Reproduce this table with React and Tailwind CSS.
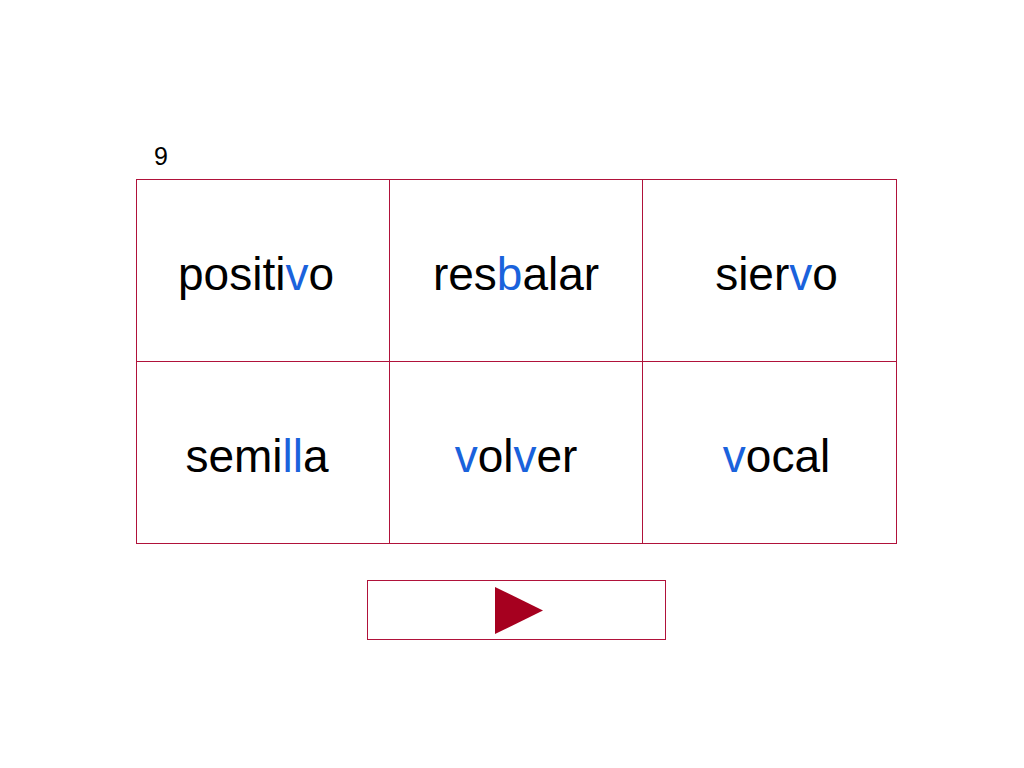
import React from "react";

const B = ({ children }) => <span className="text-[#1a62dc]">{children}</span>;

function Cell({ children, shift = "" }) {
  return (
    <div className={`flex h-[182px] items-center justify-center border-r border-b border-[#b0123a] pt-[6px] ${shift}`}>
      <span className="text-[46px] leading-none text-black">{children}</span>
    </div>
  );
}

export default function App() {
  return (
    <div className="min-h-[768px] w-[1024px] bg-white" style={{ fontFamily: '"Liberation Sans", Arial, sans-serif' }}>
      <div className="ml-[136px] w-[761px] pt-[144px]">
        <div className="pl-[18px] text-[25px] leading-none text-black h-[35px]">9</div>
        <div className="grid grid-cols-[253px_253px_254px] border-l border-t border-[#b0123a]">
          <Cell shift="pr-[14px]">positi<B>v</B>o</Cell>
          <Cell>res<B>b</B>alar</Cell>
          <Cell shift="pl-[14px]">sier<B>v</B>o</Cell>
          <Cell shift="pr-[12px]">semi<B>ll</B>a</Cell>
          <Cell><B>v</B>ol<B>v</B>er</Cell>
          <Cell shift="pl-[14px]"><B>v</B>ocal</Cell>
        </div>
        <div className="mt-[36px] flex justify-center">
          <div className="flex h-[60px] w-[299px] items-center justify-center border border-[#b0123a]">
            <svg width="48" height="47" viewBox="0 0 48 47" className="ml-[4px]">
              <polygon points="0,0 48,23.5 0,47" fill="#a6001f" />
            </svg>
          </div>
        </div>
      </div>
    </div>
  );
}
